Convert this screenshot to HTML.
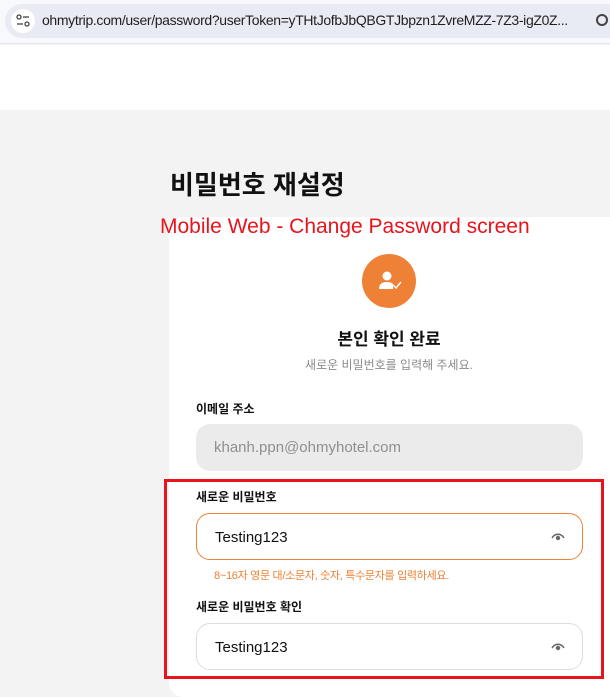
<!DOCTYPE html>
<html><head><meta charset="utf-8"><style>
*{margin:0;padding:0;box-sizing:border-box}
body{width:610px;height:679px;overflow:hidden;background:#f3f3f3;font-family:"Liberation Sans","Noto Sans CJK KR",sans-serif;position:relative}
.a{position:absolute}
.bar{left:0;top:0;width:610px;height:44px;background:#f8f9fd;border-bottom:1px solid #e3e3e8}
.pill{left:5px;top:4px;width:620px;height:34px;border-radius:17px;background:#e8ebf3}
.url{left:42px;top:12px;font-size:14px;letter-spacing:-0.35px;color:#1f1f1f;white-space:nowrap}
.hdr{left:0;top:45px;width:610px;height:65px;background:#fff}
.card{left:169px;top:217px;width:460px;height:480px;background:#fff;border-radius:14px}
.lbl{font-size:12px;font-weight:bold;color:#111;left:196px}
.inp{left:196px;width:387px;height:47px;border-radius:14px;font-size:15px;padding:15px 0 0 18px}
.eye{left:551px;width:14px;height:9px}
</style></head><body>
<div class="a bar"></div>
<div class="a pill"></div>
<div class="a" style="left:11px;top:9px;width:24px;height:24px;border-radius:12px;background:#fff"></div>
<svg class="a" style="left:15px;top:14px" width="16" height="14" viewBox="0 0 16 14"><circle cx="4" cy="3" r="2" fill="none" stroke="#444" stroke-width="1.3"/><line x1="8" y1="3" x2="14" y2="3" stroke="#444" stroke-width="1.3"/><line x1="2" y1="10" x2="8" y2="10" stroke="#444" stroke-width="1.3"/><circle cx="12" cy="10" r="2" fill="none" stroke="#444" stroke-width="1.3"/></svg>
<div class="a url">ohmytrip.com/user/password?userToken=yTHtJofbJbQBGTJbpzn1ZvreMZZ-7Z3-igZ0Z...</div>
<div class="a" style="left:596px;top:14px;width:12px;height:12px;border:2px solid #444;border-radius:50%"></div>
<div class="a hdr"></div>
<div class="a" style="left:170px;top:165px;font-size:26px;font-weight:bold;color:#111">비밀번호 재설정</div>
<div class="a card"></div>
<div class="a" style="left:160px;top:215px;font-size:21px;color:#e8141b;white-space:nowrap">Mobile Web - Change Password screen</div>
<div class="a" style="left:362px;top:254px;width:54px;height:54px;border-radius:50%;background:#ee8136"></div>
<svg class="a" style="left:378px;top:270px" width="26" height="22" viewBox="0 0 26 22"><circle cx="9" cy="6" r="4.5" fill="#fff"/><path d="M1 19c0-5 3-7 8-7 3 0 5 1 6 2v5z" fill="#fff"/><path d="M15 15l3 3 5-6" fill="none" stroke="#fff" stroke-width="1.4"/></svg>
<div class="a" style="left:169px;width:440px;top:325px;text-align:center;font-size:17px;font-weight:bold;color:#111">본인 확인 완료</div>
<div class="a" style="left:169px;width:440px;top:356px;text-align:center;font-size:12px;color:#8a8a8a">새로운 비밀번호를 입력해 주세요.</div>
<div class="a lbl" style="top:400px">이메일 주소</div>
<div class="a inp" style="top:424px;background:#ebebeb;color:#8f8f8f">khanh.ppn@ohmyhotel.com</div>
<div class="a lbl" style="top:488px">새로운 비밀번호</div>
<div class="a inp" style="top:513px;border:1px solid #ee8136;color:#111">Testing123</div>
<svg class="a eye" style="top:532px" viewBox="0 0 14 9"><path d="M1 6c3-5 9-5 12 0" fill="none" stroke="#666" stroke-width="1.4"/><circle cx="7" cy="6" r="2.2" fill="#666"/></svg>
<div class="a" style="left:214px;top:567px;font-size:11px;letter-spacing:-0.3px;color:#ee8136">8~16자 영문 대/소문자, 숫자, 특수문자를 입력하세요.</div>
<div class="a lbl" style="top:598px">새로운 비밀번호 확인</div>
<div class="a inp" style="top:623px;border:1px solid #ddd;color:#111">Testing123</div>
<svg class="a eye" style="top:642px" viewBox="0 0 14 9"><path d="M1 6c3-5 9-5 12 0" fill="none" stroke="#666" stroke-width="1.4"/><circle cx="7" cy="6" r="2.2" fill="#666"/></svg>
<div class="a" style="left:164px;top:479px;width:440px;height:200px;border:3px solid #e8141b"></div>
</body></html>
